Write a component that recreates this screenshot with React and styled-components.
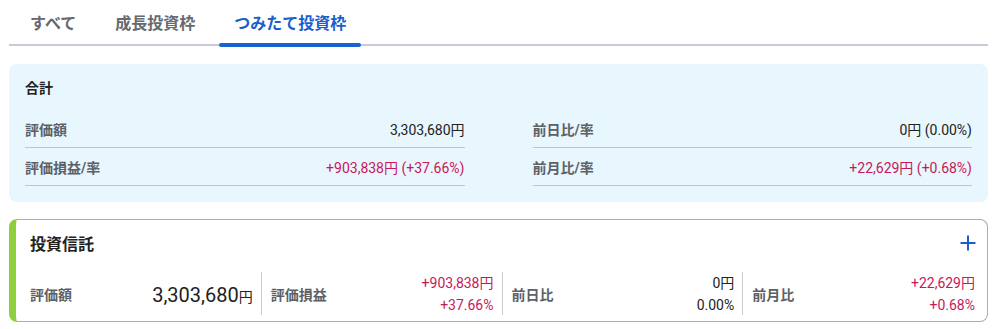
import React from "react";
import styled, { createGlobalStyle } from "styled-components";

const Global = createGlobalStyle`
  html, body { margin: 0; padding: 0; background: #fff; }
  body { font-family: Roboto, "Noto Sans CJK JP", sans-serif; color: #222; }
  * { box-sizing: border-box; }
`;

const Page = styled.div`
  padding: 0 7px 0 9px;
`;

const TabBar = styled.div`
  display: flex;
  gap: 9px;
  padding-left: 6px;
  border-bottom: 2px solid #c6ccd6;
  height: 46px;
`;

const Tab = styled.div`
  position: relative;
  height: 44px;
  padding: 0 15px;
  display: flex;
  align-items: center;
  font-size: 16px;
  font-weight: 700;
  color: ${(p) => (p.$active ? "#1a5fcc" : "#666a70")};
  &::after {
    content: "";
    display: ${(p) => (p.$active ? "block" : "none")};
    position: absolute;
    left: 0;
    right: 0;
    bottom: -3px;
    height: 4px;
    border-radius: 2px;
    background: #1a62d0;
  }
`;

const Summary = styled.section`
  margin-top: 18px;
  background: #e8f6fd;
  border-radius: 8px;
  padding: 12px 16px 16px;
`;

const SummaryTitle = styled.div`
  font-size: 14px;
  font-weight: 700;
  line-height: 24px;
  color: #222;
  margin-bottom: 10px;
`;

const SummaryGrid = styled.div`
  display: grid;
  grid-template-columns: 1fr 1fr;
  column-gap: 68px;
`;

const SummaryCol = styled.div`
  display: flex;
  flex-direction: column;
`;

const SummaryRow = styled.div`
  display: flex;
  justify-content: space-between;
  align-items: center;
  height: 38px;
  padding-top: 1px;
  border-bottom: 1px solid #bcc7d0;
`;

const Label = styled.span`
  font-size: 14px;
  font-weight: 700;
  color: #5c6167;
`;

const Value = styled.span`
  font-size: 14px;
  color: ${(p) => (p.$pos ? "#c8185a" : "#222")};
`;

const Fund = styled.section`
  margin-top: 17px;
  border: 1px solid #a9aeb4;
  border-left: 7px solid #8dcf3c;
  border-radius: 8px;
  padding: 11px 12px 6px 14px;
`;

const FundHeader = styled.div`
  display: flex;
  justify-content: space-between;
  align-items: center;
  height: 24px;
  margin-bottom: 17px;
`;

const FundTitle = styled.div`
  font-size: 16px;
  font-weight: 700;
  color: #222;
`;

const PlusBtn = styled.button`
  border: 0;
  background: none;
  padding: 0;
  margin-right: -1px;
  display: flex;
  color: #1a5fcc;
`;

const Metrics = styled.div`
  display: flex;
  height: 43px;
`;

const Metric = styled.div`
  box-sizing: content-box;
  flex: 1 1 0;
  display: flex;
  justify-content: space-between;
  align-items: center;
  padding-right: 8px;
  &:last-child { padding-right: 0; }
  & + & {
    border-left: 1px solid #c8cacd;
    padding-left: 9px;
  }
`;

const MetricLabel = styled(Label)``;

const Values = styled.div`
  display: flex;
  flex-direction: column;
  align-items: flex-end;
  line-height: 22px;
  font-size: 14px;
  color: ${(p) => (p.$pos ? "#c8185a" : "#222")};
`;

const BigValue = styled.div`
  display: flex;
  align-items: baseline;
  padding-top: 3px;
  font-size: 20px;
  color: #222;
  & small { font-size: 14px; }
`;

const leftRows = [
  ["評価額", "3,303,680円", false],
  ["評価損益/率", "+903,838円 (+37.66%)", true],
];
const rightRows = [
  ["前日比/率", "0円 (0.00%)", false],
  ["前月比/率", "+22,629円 (+0.68%)", true],
];

export default function App() {
  return (
    <Page>
      <Global />
      <TabBar>
        <Tab>すべて</Tab>
        <Tab>成長投資枠</Tab>
        <Tab $active>つみたて投資枠</Tab>
      </TabBar>

      <Summary>
        <SummaryTitle>合計</SummaryTitle>
        <SummaryGrid>
          {[leftRows, rightRows].map((rows, i) => (
            <SummaryCol key={i}>
              {rows.map(([l, v, pos]) => (
                <SummaryRow key={l}>
                  <Label>{l}</Label>
                  <Value $pos={pos}>{v}</Value>
                </SummaryRow>
              ))}
            </SummaryCol>
          ))}
        </SummaryGrid>
      </Summary>

      <Fund>
        <FundHeader>
          <FundTitle>投資信託</FundTitle>
          <PlusBtn aria-label="開く">
            <svg width="16" height="16" viewBox="0 0 16 16">
              <path d="M8 0.5V15.5M0.5 8H15.5" stroke="currentColor" strokeWidth="2" fill="none" />
            </svg>
          </PlusBtn>
        </FundHeader>
        <Metrics>
          <Metric>
            <MetricLabel>評価額</MetricLabel>
            <BigValue>
              3,303,680<small>円</small>
            </BigValue>
          </Metric>
          <Metric>
            <MetricLabel>評価損益</MetricLabel>
            <Values $pos>
              <span>+903,838円</span>
              <span>+37.66%</span>
            </Values>
          </Metric>
          <Metric>
            <MetricLabel>前日比</MetricLabel>
            <Values>
              <span>0円</span>
              <span>0.00%</span>
            </Values>
          </Metric>
          <Metric>
            <MetricLabel>前月比</MetricLabel>
            <Values $pos>
              <span>+22,629円</span>
              <span>+0.68%</span>
            </Values>
          </Metric>
        </Metrics>
      </Fund>
    </Page>
  );
}
